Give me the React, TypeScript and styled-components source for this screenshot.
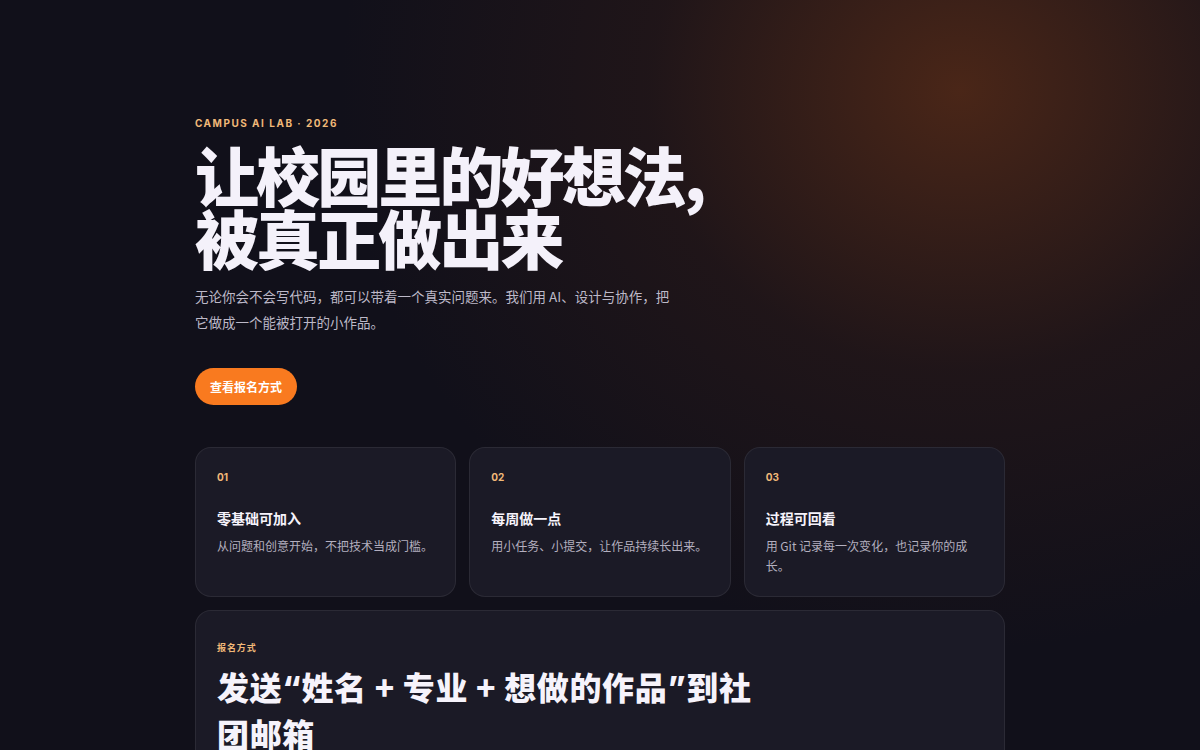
import React from "react";
import styled, { createGlobalStyle } from "styled-components";

const Global = createGlobalStyle`
  html, body { margin: 0; padding: 0; }
  body {
    background: #11101a;
    color: #f4f1fa;
    font-family: Inter, "Noto Sans CJK SC", sans-serif;
    -webkit-font-smoothing: antialiased;
  }
  * { box-sizing: border-box; }
`;

const Page = styled.div`
  min-height: 750px;
  background:
    radial-gradient(ellipse 620px 560px at 960px 90px, rgba(115, 54, 22, 0.58), rgba(62, 32, 22, 0.32) 50%, rgba(17, 16, 26, 0) 100%),
    #11101a;
  overflow: hidden;
`;

const Container = styled.main`
  width: 810px;
  margin: 0 auto;
  padding-top: 116px;
  display: flex;
  flex-direction: column;
`;

const Eyebrow = styled.div`
  font-family: Inter, sans-serif;
  font-size: 10px;
  font-weight: 700;
  letter-spacing: 0.15em;
  color: #f0b878;
  line-height: 14px;
`;

const Title = styled.h1`
  margin: 12px 0 0;
  font-family: "Noto Sans CJK SC", sans-serif;
  font-weight: 900;
  font-size: 64px;
  line-height: 63px;
  letter-spacing: -0.045em;
  color: #f4f1fa;
`;

const Lead = styled.p`
  margin: 15px 0 0;
  max-width: 480px;
  font-family: "Noto Sans CJK SC", sans-serif;
  font-size: 13.5px;
  line-height: 26px;
  color: #bdb9c8;
`;

const Button = styled.a`
  margin-top: 33px;
  align-self: flex-start;
  height: 37px;
  padding: 0 15px;
  display: inline-flex;
  align-items: center;
  border-radius: 999px;
  background: #f97a1f;
  color: #fff;
  font-family: "Noto Sans CJK SC", sans-serif;
  font-size: 12px;
  font-weight: 700;
  text-decoration: none;
`;

const Grid = styled.section`
  margin-top: 42px;
  display: grid;
  grid-template-columns: repeat(3, 1fr);
  gap: 13px;
`;

const Card = styled.article`
  background: #1b1a26;
  border: 1px solid rgba(255, 255, 255, 0.07);
  border-radius: 16px;
  padding: 21px 21px 20px;
`;

const Num = styled.div`
  font-family: Inter, sans-serif;
  font-size: 10px;
  font-weight: 700;
  line-height: 16px;
  color: #f0b878;
`;

const CardTitle = styled.h3`
  margin: 23px 0 0;
  font-family: "Noto Sans CJK SC", sans-serif;
  font-size: 14px;
  font-weight: 700;
  line-height: 20px;
  color: #f6f3fb;
`;

const CardText = styled.p`
  margin: 8px 0 0;
  font-family: "Noto Sans CJK SC", sans-serif;
  font-size: 12px;
  line-height: 20px;
  color: #b3afbf;
`;

const Signup = styled.section`
  margin-top: 13px;
  background: #1b1a26;
  border: 1px solid rgba(255, 255, 255, 0.07);
  border-radius: 16px;
  padding: 30px 21px 40px;
`;

const Label = styled.div`
  font-family: "Noto Sans CJK SC", sans-serif;
  font-size: 9px;
  font-weight: 700;
  letter-spacing: 0.1em;
  line-height: 14px;
  color: #f0b878;
`;

const SignupTitle = styled.h2`
  margin: 9px 0 0;
  max-width: 548px;
  font-family: "Noto Sans CJK SC", sans-serif;
  font-size: 32px;
  font-weight: 900;
  line-height: 45px;
  letter-spacing: 0.02em;
  color: #f6f3fb;
`;

const Quote = styled.span`
  font-family: Inter, sans-serif;
  font-weight: 800;
`;

const features = [
  { n: "01", t: "零基础可加入", d: "从问题和创意开始，不把技术当成门槛。" },
  { n: "02", t: "每周做一点", d: "用小任务、小提交，让作品持续长出来。" },
  { n: "03", t: "过程可回看", d: "用 Git 记录每一次变化，也记录你的成长。" },
];

export default function App() {
  return (
    <>
      <Global />
      <Page>
        <Container>
          <Eyebrow>CAMPUS AI LAB · 2026</Eyebrow>
          <Title>
            让校园里的好想法,
            <br />
            被真正做出来
          </Title>
          <Lead>
            无论你会不会写代码，都可以带着一个真实问题来。我们用 AI、设计与协作，把它做成一个能被打开的小作品。
          </Lead>
          <Button href="#signup">查看报名方式</Button>
          <Grid>
            {features.map((f) => (
              <Card key={f.n}>
                <Num>{f.n}</Num>
                <CardTitle>{f.t}</CardTitle>
                <CardText>{f.d}</CardText>
              </Card>
            ))}
          </Grid>
          <Signup id="signup">
            <Label>报名方式</Label>
            <SignupTitle>
              发送<Quote>“</Quote>姓名 + 专业 + 想做的作品<Quote>”</Quote>到社团邮箱
            </SignupTitle>
          </Signup>
        </Container>
      </Page>
    </>
  );
}
